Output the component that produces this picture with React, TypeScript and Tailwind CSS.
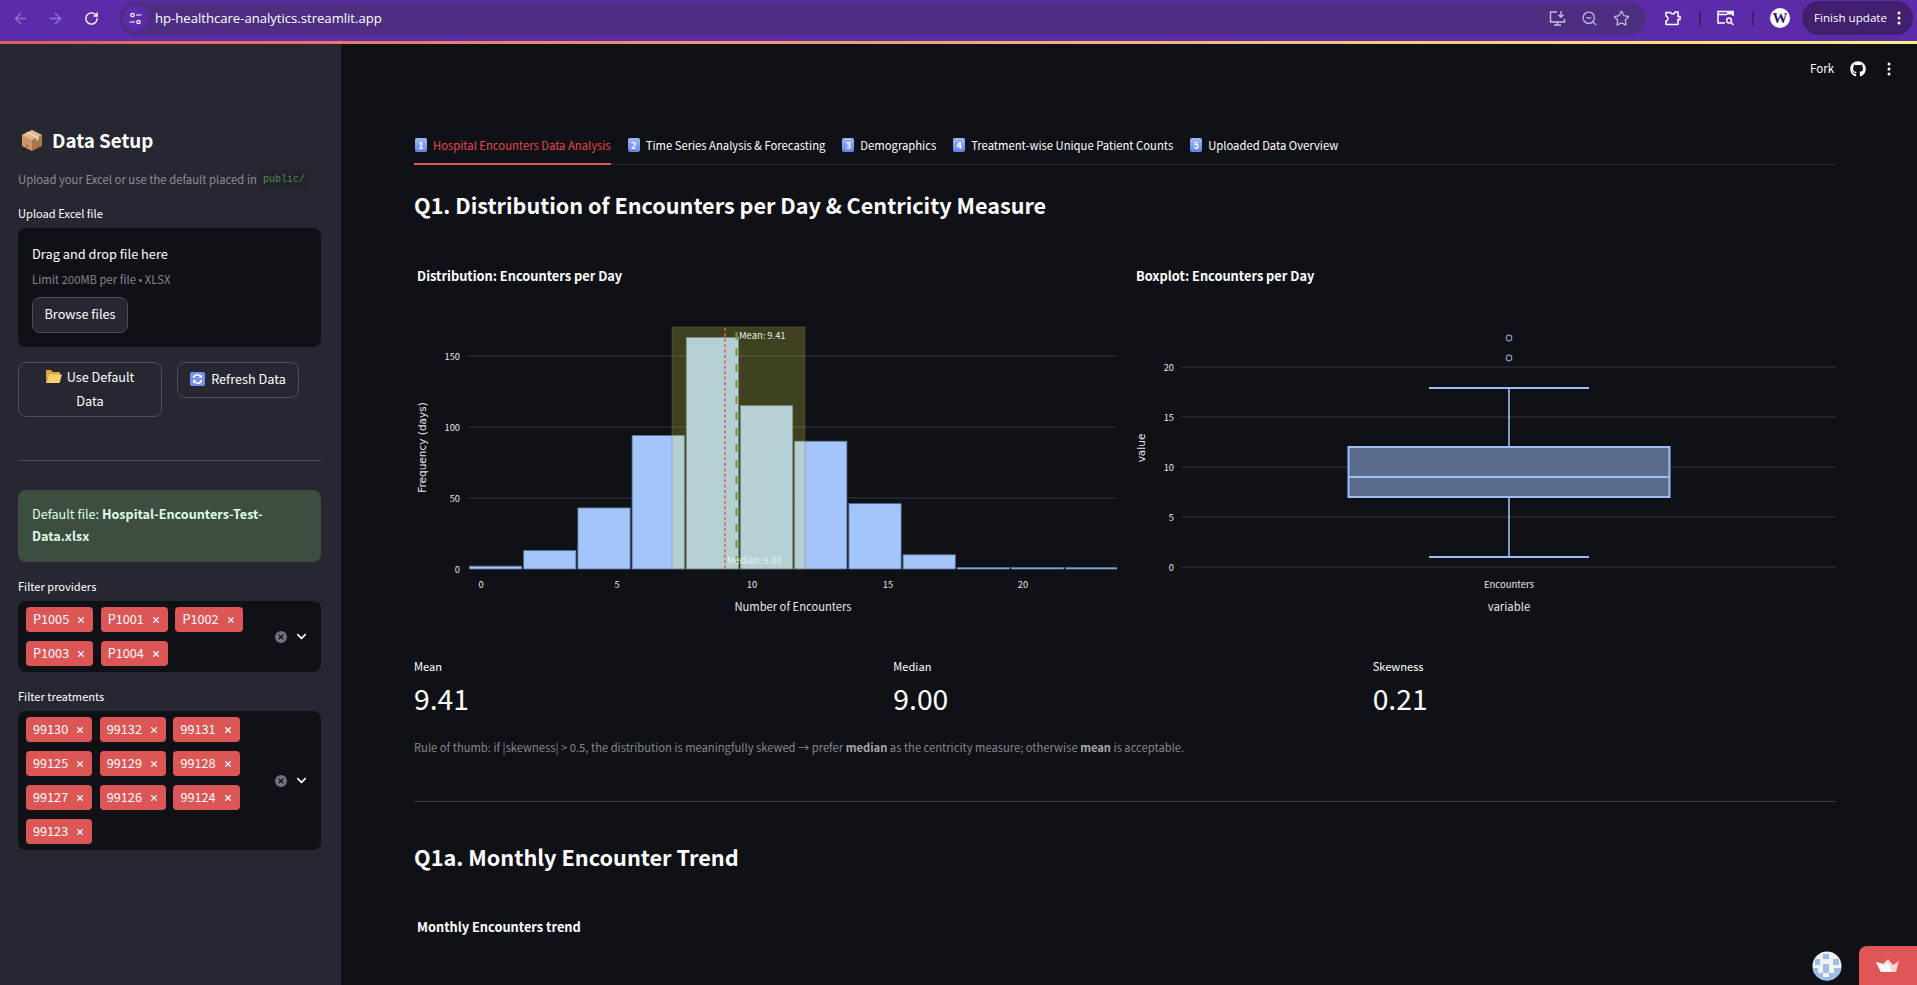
import { ArrowLeft, ArrowRight, RotateCw, ZoomOut, Star, X, ChevronDown } from "lucide-react";
import { FaGithub } from "react-icons/fa";

const bars = [2, 13, 43, 94, 163, 115, 90, 46, 10, 1, 1, 1];
const providers = ["P1005", "P1001", "P1002", "P1003", "P1004"];
const treatments = ["99130", "99132", "99131", "99125", "99129", "99128", "99127", "99126", "99124", "99123"];
const tabs = [
  "Hospital Encounters Data Analysis",
  "Time Series Analysis & Forecasting",
  "Demographics",
  "Treatment-wise Unique Patient Counts",
  "Uploaded Data Overview",
];

function Keycap({ n }: { n: number }) {
  return (
    <span className="flex h-[14px] w-[12px] items-center justify-center rounded-[2px] bg-gradient-to-b from-[#a3b9f7] to-[#6283e6] text-[9px] leading-none font-bold text-white">
      {n}
    </span>
  );
}

function PackageIcon() {
  return (
    <svg width="22" height="24" viewBox="0 0 22 24">
      <path d="M11 2 L21 7 V18 L11 23 Z" fill="#a8774a" />
      <path d="M11 2 L1 7 V18 L11 23 Z" fill="#c99a67" />
      <path d="M11 2 L21 7 L11 12 L1 7 Z" fill="#dfb98c" />
      <path d="M5 4.7 L15.5 9.8 V13 L17.5 12 V8.8 L7 3.7 Z" fill="#efd6b4" />
      <circle cx="6" cy="18" r="1.2" fill="#8f6a47" />
    </svg>
  );
}

function FolderIcon() {
  return (
    <svg width="16" height="13" viewBox="0 0 16 13">
      <path d="M0 1 Q0 0 1 0 H5 L6.5 2 H13 Q14 2 14 3 V5 H3 L0 12 Z" fill="#d9a93f" />
      <path d="M3 4.5 H16 L13.5 13 H0 Z" fill="#f6d36a" />
    </svg>
  );
}

function RefreshIcon() {
  return (
    <svg width="15" height="14" viewBox="0 0 15 14">
      <rect width="15" height="14" rx="2" fill="#7393ea" />
      <path d="M3.5 6 A4 4 0 0 1 11 5 M11.5 8 A4 4 0 0 1 4 9" fill="none" stroke="#fff" strokeWidth="1.6" />
      <path d="M11.8 2.6 V6 H8.6 Z M3.2 11.4 V8 H6.4 Z" fill="#fff" />
    </svg>
  );
}

function Tag({ label }: { label: string }) {
  return (
    <span className="flex h-[25px] items-center gap-[7px] rounded-[4px] bg-[#dd5656] pr-[7px] pl-[7px] text-[12.7px] leading-none text-white">
      {label}
      <X size={10} strokeWidth={2.6} />
    </span>
  );
}

function MultiSelect({ items }: { items: string[] }) {
  return (
    <div className="flex items-center rounded-lg bg-[#101116] py-[6px] pl-[8px]">
      <div className="flex w-[249px] flex-wrap gap-x-[7.5px] gap-y-[9px]">
        {items.map((t) => (
          <Tag key={t} label={t} />
        ))}
      </div>
      <span className="flex h-[12px] w-[12px] items-center justify-center rounded-full bg-[#70727d] text-[#101116]">
        <X size={8} strokeWidth={3.4} />
      </span>
      <ChevronDown size={15} strokeWidth={2.6} className="ml-[7px] text-white" />
    </div>
  );
}

function Sidebar() {
  return (
    <aside className="w-[341px] shrink-0 bg-[#262730] pt-[81px] pr-[20px] pl-[18px] text-white">
      <h2 className="flex h-[30px] items-center gap-[9px] pl-[3px] text-[18.8px] leading-none font-semibold">
        <PackageIcon />
        Data Setup
      </h2>
      <p className="mt-[14px] flex h-[20px] items-center text-[11.3px] whitespace-nowrap text-[#8b8d93]">
        Upload your Excel or use the default placed in
        <code className="ml-[3px] rounded-[3px] bg-[#22232b] px-[3px] py-[1px] font-['Liberation_Mono',monospace] text-[10px] leading-[15px] text-[#4f8a4f]">
          public/
        </code>
      </p>
      <label className="mt-[16px] block h-[18px] text-[11.1px] leading-[17px]">Upload Excel file</label>
      <div className="mt-[5px] h-[119px] rounded-lg bg-[#101116] px-[14px] pt-[16px]">
        <p className="h-[20px] text-[12.8px] leading-[20px]">Drag and drop file here</p>
        <p className="mt-[6px] h-[18px] text-[11.3px] leading-[18px] text-[#83858c]">Limit 200MB per file • XLSX</p>
        <button className="mt-[9px] h-[36px] w-[96px] rounded-lg border border-[#4d4e57] bg-[#262730] pb-[2px] text-[12.7px]">
          Browse files
        </button>
      </div>
      <div className="mt-[15px] flex items-start gap-[15px]">
        <button className="h-[55px] w-[144px] rounded-lg border border-[#4d4e57] bg-[#262730] px-[10px] pb-[2px] text-[12.7px] leading-[23px]">
          <span className="inline-flex items-center gap-[5px]">
            <FolderIcon />
            Use Default
          </span>
          <br />
          Data
        </button>
        <button className="flex h-[36px] w-[122px] items-center justify-center gap-[6px] rounded-lg border border-[#4d4e57] bg-[#262730] pb-[2px] text-[12.7px]">
          <RefreshIcon />
          Refresh Data
        </button>
      </div>
      <hr className="mt-[43px] border-[#4a4b53]" />
      <div className="mt-[29px] h-[72px] rounded-lg bg-[#3d4d40] px-[14px] pt-[13px] text-[12.64px] leading-[22px] text-[#dffde9]">
        Default file: <b className="font-semibold">Hospital-Encounters-Test-</b>
        <br />
        <b className="font-semibold">Data.xlsx</b>
      </div>
      <label className="mt-[16px] block h-[18px] text-[11.1px] leading-[17px]">Filter providers</label>
      <div className="mt-[5px]">
        <MultiSelect items={providers} />
      </div>
      <label className="mt-[16px] block h-[18px] text-[11.1px] leading-[17px]">Filter treatments</label>
      <div className="mt-[5px]">
        <MultiSelect items={treatments} />
      </div>
    </aside>
  );
}

function HistogramChart() {
  return (
    <svg viewBox="414 290 703 350" className="block h-[350px] w-[703px]">
      {[356, 427, 498].map((y) => (
        <line key={y} x1="468" x2="1116" y1={y} y2={y} stroke="#34363b" />
      ))}
      {bars.map((v, i) => (
        <rect
          key={i}
          x={469.5 + 54.2 * i}
          y={569 - v * 1.42}
          width="52.2"
          height={v * 1.42}
          fill="#a3c5fb"
          stroke="#5f7597"
          strokeWidth="0.8"
        />
      ))}
      <rect x="672" y="327" width="133" height="242" fill="rgb(255,255,60)" fillOpacity="0.2" stroke="#6e7460" strokeOpacity="0.4" />
      <line x1="725" x2="725" y1="328" y2="569" stroke="#e0604a" strokeWidth="1.6" strokeDasharray="3 2.4" />
      <line x1="736.5" x2="736.5" y1="332" y2="569" stroke="#6ea02c" strokeWidth="2" strokeDasharray="8 8" />
      <text x="739" y="338.5" fontSize="9.4" fill="#e8edf2">Mean: 9.41</text>
      <text x="727" y="563.5" fontSize="9.3" fill="#e8eef0">Median: 9.00</text>
      {[
        [481, "0"],
        [617, "5"],
        [752, "10"],
        [888, "15"],
        [1023, "20"],
      ].map(([x, t]) => (
        <text key={t} x={x} y="588" fontSize="9.3" textAnchor="middle" fill="#e6e8ec">{t}</text>
      ))}
      {[
        [572.5, "0"],
        [501.5, "50"],
        [430.5, "100"],
        [359.5, "150"],
      ].map(([y, t]) => (
        <text key={t} x="460" y={y} fontSize="9.3" textAnchor="end" fill="#e6e8ec">{t}</text>
      ))}
      <text x="793" y="611" fontSize="11.2" textAnchor="middle" fill="#e6e8ec">Number of Encounters</text>
      <text
        transform="translate(426 447.5) rotate(-90)"
        fontSize="10.5"
        textAnchor="middle"
        fill="#e6e8ec"
        className="font-['DejaVu_Sans',sans-serif]"
      >
        Frequency (days)
      </text>
    </svg>
  );
}

function BoxplotChart() {
  return (
    <svg viewBox="1133 290 703 350" className="block h-[350px] w-[703px]">
      {[367, 417, 467, 517, 567].map((y) => (
        <line key={y} x1="1181" x2="1835.5" y1={y} y2={y} stroke="#34363b" />
      ))}
      {[
        [571, "0"],
        [521, "5"],
        [471, "10"],
        [421, "15"],
        [371, "20"],
      ].map(([y, t]) => (
        <text key={t} x="1174" y={y} fontSize="9.3" textAnchor="end" fill="#e6e8ec">{t}</text>
      ))}
      <rect x="1348.5" y="447" width="321" height="50" fill="#5a6b8b" stroke="#9cc0f5" strokeWidth="2" />
      <line x1="1348.5" x2="1669.5" y1="477" y2="477" stroke="#9cc0f5" strokeWidth="2" />
      <line x1="1509" x2="1509" y1="388" y2="447" stroke="#9cc0f5" strokeWidth="1.6" />
      <line x1="1509" x2="1509" y1="497" y2="557" stroke="#9cc0f5" strokeWidth="1.6" />
      <line x1="1429" x2="1589" y1="388" y2="388" stroke="#9cc0f5" strokeWidth="2" />
      <line x1="1429" x2="1589" y1="557" y2="557" stroke="#9cc0f5" strokeWidth="2" />
      <circle cx="1509" cy="338" r="2.8" fill="none" stroke="#7b96c4" strokeWidth="1.2" />
      <circle cx="1509" cy="358" r="2.8" fill="none" stroke="#7b96c4" strokeWidth="1.2" />
      <text x="1509" y="588" fontSize="9.5" textAnchor="middle" fill="#e6e8ec">Encounters</text>
      <text x="1509" y="611" fontSize="11.3" textAnchor="middle" fill="#e6e8ec">variable</text>
      <text
        transform="translate(1145 448) rotate(-90)"
        fontSize="10.5"
        textAnchor="middle"
        fill="#e6e8ec"
        className="font-['DejaVu_Sans',sans-serif]"
      >
        value
      </text>
    </svg>
  );
}

function Metric({ label, value }: { label: string; value: string }) {
  return (
    <div>
      <p className="h-[18px] text-[11.1px] leading-[16px]">{label}</p>
      <p className="mt-[2px] h-[40px] text-[28.3px] leading-[40px]">{value}</p>
    </div>
  );
}

function Main() {
  return (
    <main className="relative min-w-0 flex-1 bg-[#101116] pt-[81px] pr-[81px] pl-[73px] text-white">
      <div className="absolute top-[15px] right-[26px] flex h-[20px] items-center text-[11.5px]">
        Fork
        <FaGithub size={16} className="ml-[16px]" />
        <svg width="4" height="14" viewBox="0 0 4 14" className="ml-[21px]" fill="#fff">
          <circle cx="2" cy="2" r="1.5" />
          <circle cx="2" cy="7" r="1.5" />
          <circle cx="2" cy="12" r="1.5" />
        </svg>
      </div>

      <div className="flex gap-[17px] border-b border-[#2a2b31]">
        {tabs.map((t, i) => (
          <div
            key={t}
            className={
              i === 0
                ? "-mb-px flex h-[40px] items-center gap-[6px] border-b-2 border-[#e05555] pt-[2px] pl-[1px] text-[11.25px] whitespace-nowrap text-[#e5484d]"
                : "-mb-px flex h-[40px] items-center gap-[6px] border-b-2 border-transparent pt-[2px] text-[11.25px] whitespace-nowrap"
            }
          >
            <Keycap n={i + 1} />
            {t}
          </div>
        ))}
      </div>

      <h2 className="mt-[22px] h-[36px] text-[21.6px] leading-[36px] font-semibold">
        Q1. Distribution of Encounters per Day &amp; Centricity Measure
      </h2>

      <div className="mt-[43px] grid grid-cols-2 gap-x-[16px]">
        <div>
          <p className="h-[20px] pl-[3px] text-[12.8px] leading-[20px] font-bold">Distribution: Encounters per Day</p>
          <div className="mt-[4px]">
            <HistogramChart />
          </div>
        </div>
        <div>
          <p className="h-[20px] pl-[3px] text-[12.8px] leading-[20px] font-bold">Boxplot: Encounters per Day</p>
          <div className="mt-[4px]">
            <BoxplotChart />
          </div>
        </div>
      </div>

      <div className="mt-[18px] grid grid-cols-3 gap-x-[16px]">
        <Metric label="Mean" value="9.41" />
        <Metric label="Median" value="9.00" />
        <Metric label="Skewness" value="0.21" />
      </div>

      <p className="mt-[20px] h-[20px] text-[11.2px] leading-[18px] text-[#85878c]">
        Rule of thumb: if |skewness| &gt; 0.5, the distribution is meaningfully skewed → prefer{" "}
        <b className="text-[#a5a7ad]">median</b> as the centricity measure; otherwise{" "}
        <b className="text-[#a5a7ad]">mean</b> is acceptable.
      </p>

      <hr className="mt-[43px] border-[#3c3d44]" />

      <h2 className="mt-[37px] h-[36px] text-[21.7px] leading-[36px] font-semibold">Q1a. Monthly Encounter Trend</h2>
      <p className="mt-[42px] h-[20px] pl-[3px] text-[12.8px] leading-[20px] font-bold">Monthly Encounters trend</p>

      <div className="absolute right-[75px] bottom-[4px]">
        <svg width="30" height="30" viewBox="0 0 30 30">
          <defs>
            <clipPath id="av">
              <circle cx="15" cy="15" r="14.5" />
            </clipPath>
          </defs>
          <g clipPath="url(#av)">
            <rect width="30" height="30" fill="#f0f2f5" />
            <rect y="17" width="30" height="13" fill="#9dbde4" />
            <rect x="11" y="3" width="6" height="5" fill="#9dbde4" />
            <rect x="3" y="8" width="5" height="6" fill="#9dbde4" />
            <rect x="21" y="8" width="6" height="6" fill="#9dbde4" />
            <rect x="11" y="13" width="6" height="5" fill="#9dbde4" />
            <rect x="6" y="17" width="5" height="5" fill="#f0f2f5" />
            <rect x="17" y="17" width="5" height="5" fill="#f0f2f5" />
            <rect x="11" y="22" width="6" height="4" fill="#f0f2f5" />
          </g>
        </svg>
      </div>
      <div className="absolute right-0 bottom-0 flex h-[39px] w-[58px] items-center justify-center rounded-tl-lg bg-[#e05555]">
        <svg width="24" height="14" viewBox="0 0 24 14">
          <path d="M0 3 L7 5 L12 0 L17 6 L23 2 L20 13 L5 13 Z" fill="#fbd5dc" />
          <path d="M0 3 L7 5 L11 13 H5 Z" fill="#fff" />
          <path d="M7 7 L12 4 L16 13 H7 Z" fill="#fff" />
        </svg>
      </div>
    </main>
  );
}

function ChromeBar() {
  return (
    <header className="flex h-[41px] shrink-0 items-start bg-[#5c2baa] font-['Open_Sans',sans-serif] text-white">
      <div className="flex h-[36px] items-center pl-[12px]">
        <ArrowLeft size={17} className="text-[#9273cf]" />
        <ArrowRight size={17} className="ml-[18px] text-[#9273cf]" />
        <RotateCw size={15} strokeWidth={2.2} className="ml-[20px]" />
      </div>
      <div className="mt-[2px] ml-[20px] flex h-[33px] w-[1527px] items-center rounded-full bg-[#4d2e83] pr-[16px] pl-[4px]">
        <span className="flex h-[25px] w-[25px] items-center justify-center rounded-full bg-[#5c2baa]">
          <svg width="13" height="13" viewBox="0 0 13 13" fill="none" stroke="#fff" strokeWidth="1.2">
            <circle cx="3.5" cy="3" r="1.7" />
            <circle cx="9.5" cy="10" r="1.7" />
            <path d="M7 3 H12.5 M0.5 10 H6" />
          </svg>
        </span>
        <span className="ml-[7px] text-[13.1px] leading-none">hp-healthcare-analytics.streamlit.app</span>
        <span className="ml-auto flex items-center gap-[15px] text-[#c6bcd9]">
          <svg width="17" height="17" viewBox="0 0 17 17" fill="none" stroke="currentColor" strokeWidth="1.4">
            <path d="M8 2 H1.5 V12 H15.5 V9 M5 15 H12 M8.5 12 V15" />
            <path d="M12 1 V7 M9.5 4.8 L12 7.3 L14.5 4.8" />
          </svg>
          <ZoomOut size={17} strokeWidth={1.8} />
          <Star size={17} strokeWidth={1.8} />
        </span>
      </div>
      <div className="flex h-[36px] items-center">
        <svg width="16" height="15" viewBox="0 0 16 15" fill="none" stroke="#fff" strokeWidth="1.5" className="ml-[19px]">
          <path d="M1 1.5 H5.5 Q6 3 8 3 Q9.5 3 10 1 L13 1 V5.5 H15 V8.5 H13 V13.5 H1 V10 Q3 9.5 3 7.5 Q3 5.5 1 5 Z" />
        </svg>
        <span className="ml-[18px] h-[15px] w-[2px] bg-[#3f1f6e]" />
        <svg width="18" height="16" viewBox="0 0 18 16" fill="none" stroke="#fff" strokeWidth="1.5" className="ml-[16px]">
          <path d="M8 13 H1 V1.5 H16 V6 M1 4.5 H10" />
          <rect x="10" y="1" width="6.5" height="3.5" fill="#fff" stroke="none" />
          <circle cx="12" cy="10.5" r="2.4" />
          <path d="M14 12.5 L16.5 15" />
        </svg>
        <span className="ml-[17px] h-[15px] w-[2px] bg-[#3f1f6e]" />
        <span className="ml-[16px] flex h-[20px] w-[20px] items-center justify-center rounded-full bg-white font-['Liberation_Serif',serif] text-[15px] leading-none font-bold text-[#36176b]">
          W
        </span>
        <span className="ml-[12px] flex h-[34px] w-[111px] items-center rounded-full bg-[#3f1f6e] pl-[12px] text-[11.6px] whitespace-nowrap">
          Finish update
          <svg width="4" height="14" viewBox="0 0 4 14" className="ml-[10px]" fill="#fff">
            <circle cx="2" cy="2" r="1.5" />
            <circle cx="2" cy="7" r="1.5" />
            <circle cx="2" cy="12" r="1.5" />
          </svg>
        </span>
      </div>
    </header>
  );
}

export default function App() {
  return (
    <div className="flex h-screen w-full flex-col overflow-hidden bg-[#101116] font-['Noto_Sans_CJK_JP',sans-serif]">
      <ChromeBar />
      <div className="h-[3px] shrink-0 bg-gradient-to-r from-[#e05c5c] to-[#fdee85]" />
      <div className="flex min-h-0 flex-1">
        <Sidebar />
        <Main />
      </div>
    </div>
  );
}
